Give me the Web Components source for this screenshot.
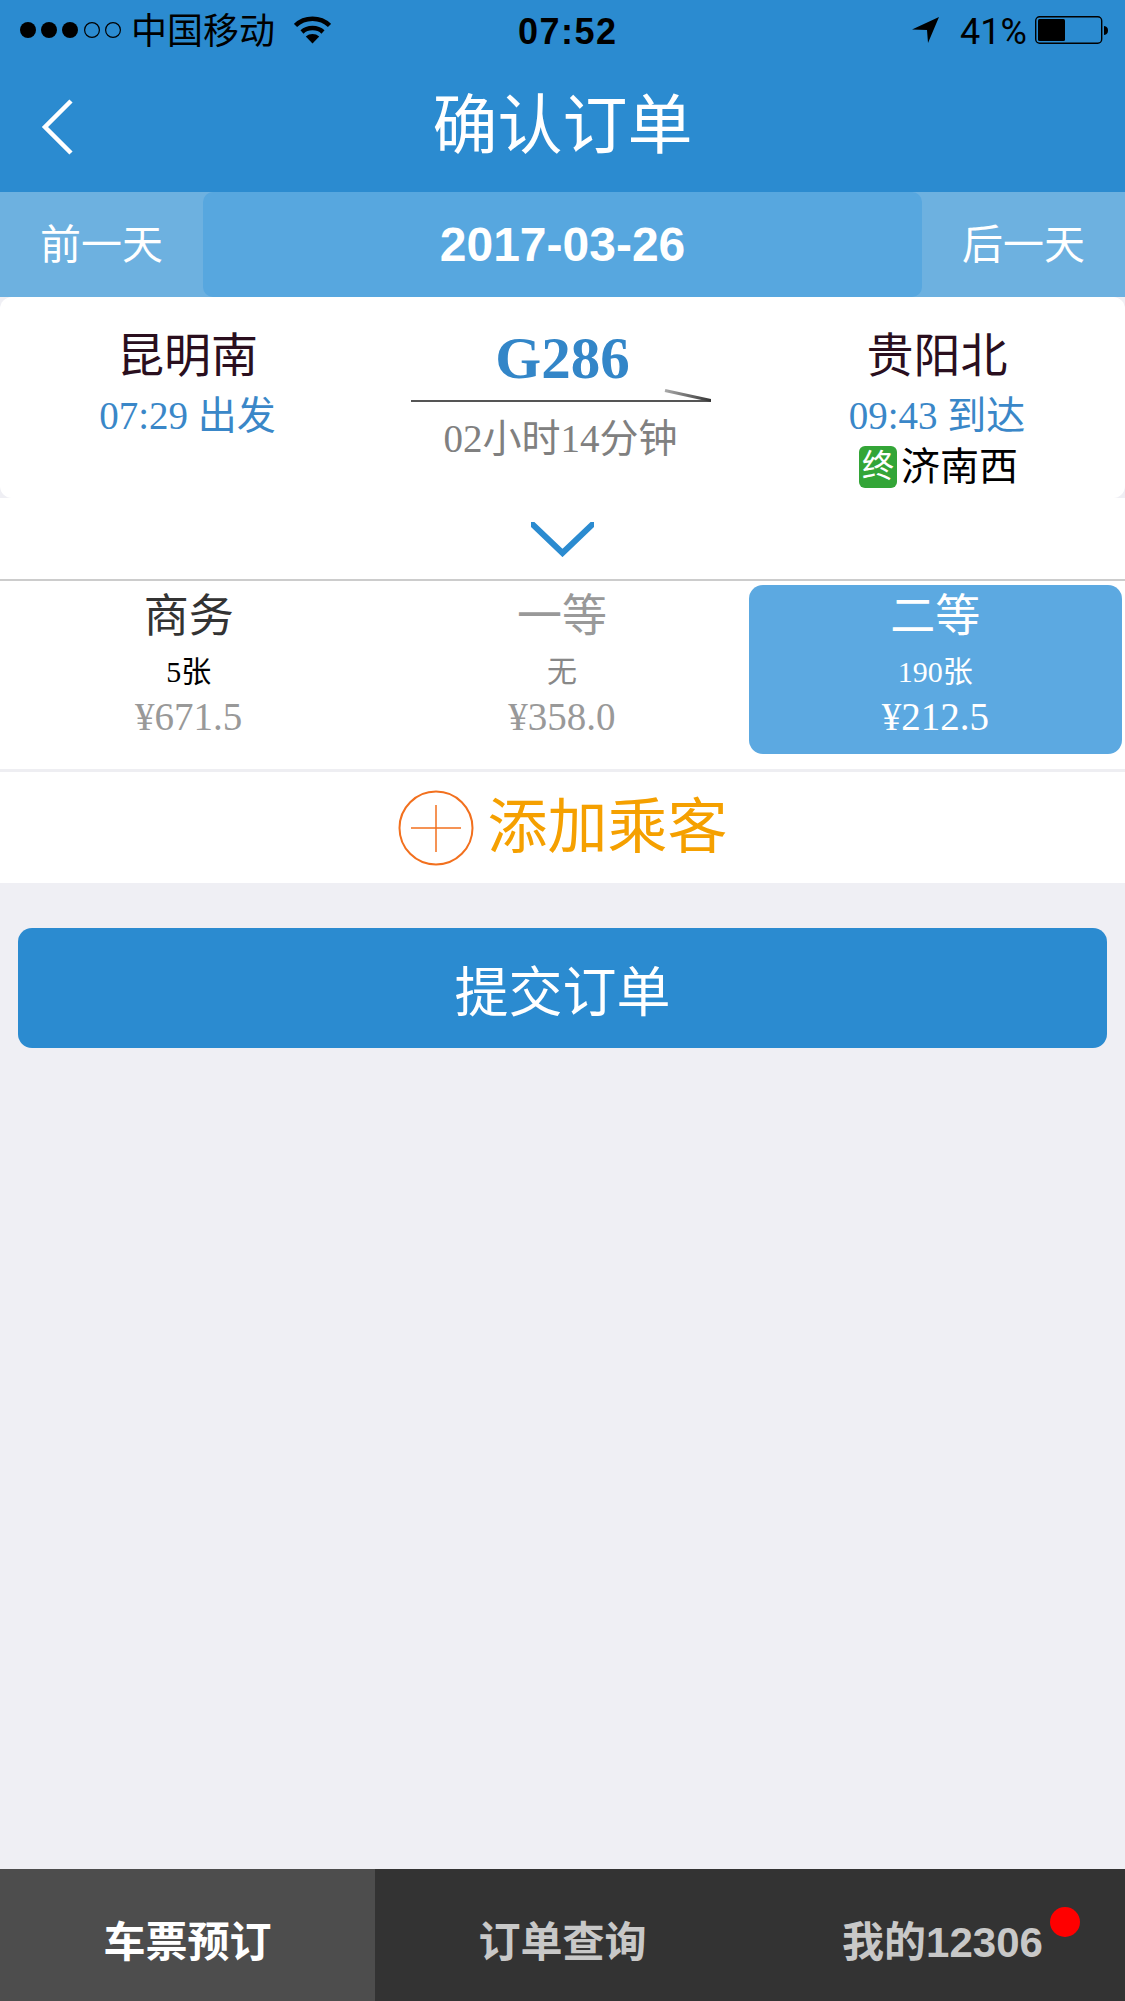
<!DOCTYPE html>
<html lang="zh">
<head>
<meta charset="utf-8">
<title>确认订单</title>
<style>
  html, body { margin: 0; padding: 0; }
  body {
    width: 1125px;
    height: 2001px;
    overflow: hidden;
    display: flex;
    flex-direction: column;
    background: #EFEFF4;
    font-family: "Liberation Sans", "Noto Sans CJK SC", sans-serif;
  }
  .vazio { flex: 1; }
</style>
</head>
<body>
  <barra-status></barra-status>
  <barra-navegacao>确认订单</barra-navegacao>
  <barra-data data="2017-03-26"></barra-data>
  <info-trem></info-trem>
  <expandir-detalhes></expandir-detalhes>
  <lista-assentos>
    <opcao-assento nome="商务" qtd="5张" preco="¥671.5"></opcao-assento>
    <opcao-assento nome="一等" qtd="无" preco="¥358.0" esgotado></opcao-assento>
    <opcao-assento nome="二等" qtd="190张" preco="¥212.5" selecionado></opcao-assento>
  </lista-assentos>
  <adicionar-passageiro>添加乘客</adicionar-passageiro>
  <botao-enviar>提交订单</botao-enviar>
  <div class="vazio"></div>
  <barra-abas>
    <item-aba ativo>车票预订</item-aba>
    <item-aba>订单查询</item-aba>
    <item-aba ponto>我的12306</item-aba>
  </barra-abas>

<script>
const SANS = `"Liberation Sans", "Noto Sans CJK SC", sans-serif`;
const SERIF = `"Liberation Serif", "Noto Sans CJK SC", serif`;

function definir(nome, html) {
  class Elemento extends HTMLElement {
    connectedCallback() {
      if (this.shadowRoot) return;
      this.attachShadow({ mode: "open" });
      this.shadowRoot.innerHTML = typeof html === "function" ? html(this) : html;
    }
  }
  customElements.define(nome, Elemento);
}

definir("barra-status", `
  <style>
    :host { display: block; height: 60px; background: #2B8BD0; position: relative; color: #000; font-family: ${SANS}; }
    .linha { display: flex; align-items: center; height: 60px; }
    .sinal { margin-left: 20px; display: block; }
    .operadora { position: relative; top: 2px; font-size: 36px; line-height: 60px; margin-left: 8px; width: 144px; white-space: nowrap; }
    .wifi { margin-left: 19px; display: block; }
    .hora { position: absolute; left: 518px; top: 2px; font-size: 36px; line-height: 60px; font-weight: 700; letter-spacing: 1.5px; }
    .direita { margin-left: auto; display: flex; align-items: center; }
    .seta { display: block; margin-right: 21px; }
    .pct { position: relative; top: 2px; font-family: Roboto, ${SANS}; font-size: 36px; font-weight: 400; line-height: 60px; width: 64px; white-space: nowrap; margin-right: 11px; }
    .bateria { display: block; margin-right: 17px; }
  </style>
  <div class="linha">
    <svg class="sinal" width="103" height="18" viewBox="0 0 103 18">
      <circle cx="8" cy="9" r="8"/><circle cx="29" cy="9" r="8"/><circle cx="50" cy="9" r="8"/>
      <circle cx="72" cy="9" r="7.4" fill="none" stroke="#000" stroke-width="1.2"/>
      <circle cx="93" cy="9" r="7.4" fill="none" stroke="#000" stroke-width="1.2"/>
    </svg>
    <span class="operadora">中国移动</span>
    <svg class="wifi" width="37" height="28" viewBox="0 0 37 28">
      <path d="M1.5 9.5C10.5 .5 26.500 .5 35.500 9.500" fill="none" stroke="#000" stroke-width="4.500"/>
      <path d="M8 16C13.500 10.800 23.500 10.800 29 16" fill="none" stroke="#000" stroke-width="4.500"/>
      <path d="M11.800 20.500C15.500 17.200 21.500 17.200 25.200 20.500L18.500 27.500Z"/>
    </svg>
    <span class="hora">07:52</span>
    <div class="direita">
      <svg class="seta" width="27" height="26" viewBox="0 0 27 26"><path d="M0 12.500L27 0 16 26 15 13Z"/></svg>
      <span class="pct">41%</span>
      <svg class="bateria" width="73" height="28" viewBox="0 0 73 28">
        <rect x=".7" y=".7" width="66" height="26.600" rx="4" fill="none" stroke="#000" stroke-width="1.400"/>
        <rect x="3" y="3" width="27" height="22" rx="1.500"/>
        <path d="M69 10C72 10.500 73 12 73 14.500S72 18.500 69 19Z"/>
      </svg>
    </div>
  </div>
`);

definir("barra-navegacao", `
  <style>
    :host { display: flex; align-items: center; justify-content: center; position: relative; height: 132px; background: #2B8BD0; color: #fff; font-family: ${SANS}; font-size: 65px; line-height: 132px; }
    svg { position: absolute; left: 40px; top: 38px; }
  </style>
  <svg width="36" height="58" viewBox="0 0 36 58"><path d="M31 3L5 29 31 55" fill="none" stroke="#fff" stroke-width="4.500"/></svg>
  <span><slot></slot></span>
`);

definir("barra-data", el => `
  <style>
    :host { display: grid; grid-template-columns: 203px 1fr 203px; height: 105px; background: #6DB1E0; color: #fff; font-family: ${SANS}; }
    div { display: flex; align-items: center; justify-content: center; font-size: 41px; padding-bottom: 7px; box-sizing: border-box; }
    .centro { background: #57A7DF; border-radius: 10px; font-size: 48px; font-weight: 700; padding-bottom: 0; }
  </style>
  <div>前一天</div>
  <div class="centro">${el.getAttribute("data")}</div>
  <div>后一天</div>
`);

definir("info-trem", `
  <style>
    :host { display: grid; grid-template-columns: 375px 1fr 376px; height: 201px; background: #fff; border-radius: 12px; font-family: ${SERIF}; text-align: center; box-sizing: border-box; }
    .coluna { padding-top: 29px; }
    .estacao { font-family: ${SANS}; font-size: 47px; line-height: 60px; color: #2A0F1E; }
    .hora { font-size: 39px; line-height: 59px; color: #3A87C8; white-space: nowrap; }
    .fim { display: flex; align-items: center; justify-content: center; padding-left: 3px; font-family: ${SANS}; font-size: 39px; line-height: 44px; color: #000; gap: 4px; }
    .fim b { display: block; width: 38px; height: 42px; border-radius: 6px; background: #33A537; color: #fff; font-size: 32px; font-weight: 400; line-height: 40px; }
    .meio { padding: 31px 3px 0 0; display: flex; flex-direction: column; align-items: center; }
    .trem { position: relative; left: 2px; font-size: 59px; font-weight: 700; line-height: 60px; color: #3386C8; }
    svg { display: block; }
    .tempo { font-size: 39px; line-height: 54px; color: #808080; white-space: nowrap; }
  </style>
  <div class="coluna">
    <div class="estacao">昆明南</div>
    <div class="hora">07:29 出发</div>
  </div>
  <div class="meio">
    <div class="trem">G286</div>
    <svg width="300" height="24" viewBox="0 0 300 24">
      <defs><linearGradient id="ponta"><stop offset="0" stop-color="#aaa"/><stop offset="1" stop-color="#333"/></linearGradient></defs>
      <path d="M0 13H300" stroke="#555" stroke-width="2"/>
      <path d="M254 2.500L300 12.500" stroke="url(#ponta)" stroke-width="3"/>
    </svg>
    <div class="tempo">02小时14分钟</div>
  </div>
  <div class="coluna">
    <div class="estacao">贵阳北</div>
    <div class="hora">09:43 到达</div>
    <div class="fim"><b>终</b><span>济南西</span></div>
  </div>
`);

definir("expandir-detalhes", `
  <style>
    :host { display: flex; justify-content: center; background: #fff; border-bottom: 2px solid #CCCCCC; padding-top: 24px; height: 57px; }
    svg { display: block; }
  </style>
  <svg width="63" height="35" viewBox="0 0 63 35"><path d="M-2 -1L31.500 31 65 -1" fill="none" stroke="#2B8BD0" stroke-width="6"/></svg>
`);

definir("lista-assentos", `
  <style>
    :host { display: grid; grid-template-columns: repeat(3, 1fr); padding: 4px 3px 0 2px; background: #fff; border-bottom: 3px solid #EEEEF2; height: 184px; }
  </style>
  <slot></slot>
`);

definir("opcao-assento", el => {
  const sel = el.hasAttribute("selecionado");
  const esg = el.hasAttribute("esgotado");
  return `
  <style>
    :host { display: block; height: 169px; text-align: center; font-family: ${SERIF}; border-radius: 14px; background: ${sel ? "#5CA9E1" : "transparent"}; }
    .nome { font-family: ${SANS}; font-size: 45px; line-height: 64px; height: 60px; color: ${sel ? "#fff" : esg ? "#999" : "#333"}; }
    .qtd { font-size: 30px; line-height: 54px; color: ${sel ? "#fff" : esg ? "#888" : "#000"}; }
    .preco { font-size: 39px; line-height: 36px; color: ${sel ? "#fff" : "#999"}; }
  </style>
  <div class="nome">${el.getAttribute("nome")}</div>
  <div class="qtd">${el.getAttribute("qtd")}</div>
  <div class="preco">${el.getAttribute("preco")}</div>`;
});

definir("adicionar-passageiro", `
  <style>
    :host { display: flex; align-items: center; justify-content: center; gap: 14px; height: 111px; background: #fff; color: #F5A000; font-family: ${SANS}; font-size: 60px; }
    svg { display: block; }
    span { position: relative; top: -6px; }
  </style>
  <svg width="76" height="76" viewBox="0 0 76 76">
    <circle cx="38" cy="38" r="36.500" fill="none" stroke="#F2701E" stroke-width="2"/>
    <path d="M13 38H63M38 15V62" stroke="#F2701E" stroke-width="1.500"/>
  </svg>
  <span><slot></slot></span>
`);

definir("botao-enviar", `
  <style>
    :host { display: flex; align-items: center; justify-content: center; height: 120px; margin: 45px 18px 0; border-radius: 14px; background: #2B8BD0; color: #fff; font-family: ${SANS}; font-size: 54px; }
  </style>
  <slot></slot>
`);

definir("barra-abas", `
  <style>
    :host { display: grid; grid-template-columns: repeat(3, 375px); height: 132px; background: #333333; }
  </style>
  <slot></slot>
`);

definir("item-aba", el => {
  const ativo = el.hasAttribute("ativo");
  const ponto = el.hasAttribute("ponto");
  return `
  <style>
    :host { display: flex; align-items: center; justify-content: center; position: relative; padding-top: 6px; box-sizing: border-box; background: ${ativo ? "#4D4D4D" : "transparent"}; color: ${ativo ? "#fff" : "#C8C8C8"}; font-family: ${SANS}; font-size: 42px; font-weight: 700; }
    span { position: relative; left: ${ponto ? "5" : "0"}px; }
    i { position: absolute; left: 300px; top: 38px; width: 30px; height: 30px; border-radius: 50%; background: #FF0000; }
  </style>
  <span><slot></slot></span>
  ${ponto ? "<i></i>" : ""}`;
});
</script>
</body>
</html>
